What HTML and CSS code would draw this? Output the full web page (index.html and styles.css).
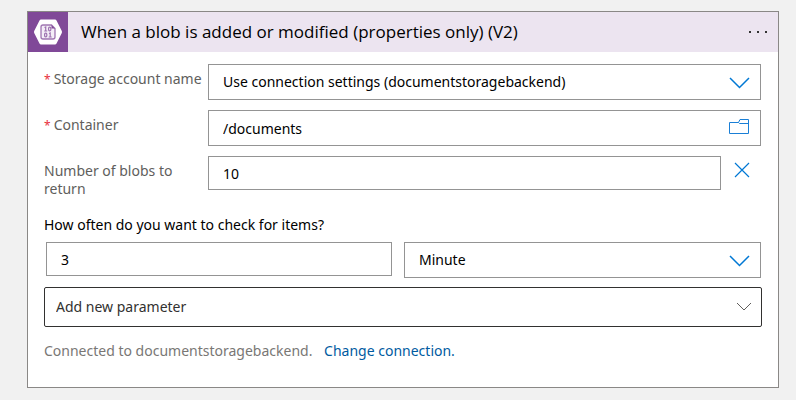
FILE: index.html
```html
<!DOCTYPE html>
<html lang="en">
<head>
<meta charset="utf-8">
<meta name="viewport" content="width=device-width, initial-scale=1">
<title>When a blob is added or modified</title>
<link rel="stylesheet" href="styles.css">
</head>
<body>
<main class="card">
  <header class="card-header">
    <span class="card-icon">
      <svg width="40" height="40" viewBox="0 0 40 40" aria-hidden="true">
        <path d="M13 7.500h14q1 0 1.500 .9l5.300 10.600q.4 1 0 2l-5.300 10.600q-.5 .9-1.500 .9H13q-1 0-1.500-.9L6.200 21q-.4-1 0-2l5.300-10.600q.5-.9 1.500-.9z" fill="#fff"/>
        <path d="M15 13h8.500l3.500 3.500V25q0 2-2 2H15q-2 0-2-2V15q0-2 2-2z" fill="#f4eef7" stroke="#804998" stroke-opacity=".75" stroke-width="1.300"/>
        <path d="M23.500 13v3.500H27z" fill="#804998"/>
        <g fill="none" stroke="#804998" stroke-opacity=".75" stroke-width="1.200">
          <path d="M16.500 15.500l1.200-.5v4M16.200 19h3"/>
          <rect x="20.600" y="15.200" width="2.200" height="3.600" rx="1"/>
          <rect x="16.600" y="21.200" width="2.200" height="3.600" rx="1"/>
          <path d="M21 21.500l1.200-.5v4M20.700 25h3"/>
        </g>
      </svg>
    </span>
    <h1 class="card-title">When a blob is added or modified (properties only) (V2)</h1>
    <button class="icon-button menu-button" type="button" aria-label="More commands">
      <svg width="20" height="4" viewBox="0 0 20 4" fill="#333" aria-hidden="true"><path d="M1 1h2v2H1zM9 1h2v2H9zM17 1h2v2h-2z"/></svg>
    </button>
  </header>
  <form class="card-body">
    <div class="row">
      <label class="label" for="account"><span class="required">*</span>Storage account name</label>
      <div class="field">
        <select class="control" id="account"><option>Use connection settings (documentstoragebackend)</option></select>
        <svg class="field-icon" width="22" height="12" viewBox="0 0 22 12" aria-hidden="true"><path d="M2 1l9.500 9.500L21 1" fill="none" stroke="#0078d4" stroke-width="1.500"/></svg>
      </div>
    </div>
    <div class="row">
      <label class="label" for="container"><span class="required">*</span>Container</label>
      <div class="field">
        <input class="control" id="container" type="text" value="/documents">
        <button class="icon-button field-icon folder" type="button" aria-label="Browse folders">
          <svg width="22" height="16" viewBox="0 0 22 16" fill="none" stroke="#1a7fd6" aria-hidden="true"><path d="M1.500 3.500h9l1.500-3h8.500v14h-19zM10.500 3.500l1 1h9"/></svg>
        </button>
      </div>
    </div>
    <div class="row">
      <label class="label" for="count">Number of blobs to return</label>
      <div class="field"><input class="control short" id="count" type="text" value="10"></div>
      <button class="icon-button remove" type="button" aria-label="Remove parameter">
        <svg width="16" height="16" viewBox="0 0 16 16" aria-hidden="true"><path d="M1 1l14 14M15 1L1 15" fill="none" stroke="#0078d4" stroke-width="1.200"/></svg>
      </button>
    </div>
    <fieldset class="schedule">
      <legend class="schedule-title">How often do you want to check for items?</legend>
      <div class="schedule-fields">
        <div class="field"><input class="control short" type="text" value="3" aria-label="Interval"></div>
        <div class="field">
          <select class="control" aria-label="Frequency"><option>Minute</option></select>
          <svg class="field-icon" width="22" height="12" viewBox="0 0 22 12" aria-hidden="true"><path d="M2 1l9.500 9.500L21 1" fill="none" stroke="#0078d4" stroke-width="1.500"/></svg>
        </div>
      </div>
    </fieldset>
    <div class="field">
      <select class="control parameter" aria-label="Add new parameter"><option>Add new parameter</option></select>
      <svg class="field-icon parameter-icon" width="16" height="10" viewBox="0 0 16 10" aria-hidden="true"><path d="M1 1l7 7 7-7" fill="none" stroke="#605e5c"/></svg>
    </div>
    <p class="connection">Connected to documentstoragebackend. <a class="link" href="#connection">Change connection.</a></p>
  </form>
</main>
</body>
</html>
```
FILE: styles.css
```css
* {
  box-sizing: border-box;
}

body {
  margin: 0;
  padding: 11px 17px 12px 27px;
  background: #f1f1f1;
  color: #000;
  font: 14px/18px "Segoe UI", "Noto Sans", sans-serif;
}

.card {
  border: 1px solid #8a8886;
  background: #fff;
}

.card-header {
  display: flex;
  align-items: center;
  height: 40px;
  background: #ece4f0;
}

.card-icon {
  width: 40px;
  height: 40px;
  background: #804998;
}

.card-title {
  flex: 1;
  margin: 0 0 0 13px;
  font-family: "Segoe UI", "Open Sans", sans-serif;
  font-size: 17px;
  font-weight: 400;
  line-height: 24px;
}

.icon-button {
  display: flex;
  padding: 0;
  border: 0;
  background: none;
  cursor: pointer;
}

.menu-button {
  margin-right: 10px;
}

.card-body {
  padding: 12px 16px 27px;
}

.row {
  display: flex;
  align-items: flex-start;
  margin: 0 1px 10px 0;
}

.label {
  flex: 0 0 164px;
  padding: 6px 6px 0 0;
  color: #605e5c;
}

.required {
  margin-right: 3px;
  color: #e8303c;
  font-size: 12px;
}

.field {
  position: relative;
  flex: 1;
  min-width: 0;
}

.control {
  display: block;
  width: 100%;
  height: 36px;
  margin: 0;
  padding: 0 14px;
  border: 1px solid #949494;
  border-radius: 0;
  appearance: none;
  background: #fff;
  color: #000;
  font: inherit;
}

.short {
  height: 34px;
}

.field-icon {
  position: absolute;
  top: 13px;
  right: 11px;
  pointer-events: none;
}

.folder {
  top: 9px;
  pointer-events: auto;
}

.remove {
  margin: 6px 11px 0 13px;
}

.schedule {
  min-width: 0;
  margin: 0 1px 9px 0;
  padding: 8px 0 0;
  border: 0;
}

.schedule-title {
  float: left;
  width: 100%;
  margin-bottom: 8px;
  padding: 0;
}

.schedule-fields {
  display: grid;
  clear: both;
  grid-template-columns: 346fr 357fr;
  gap: 12px;
  padding-left: 2px;
}

.parameter {
  height: 40px;
  padding: 0 11px;
  border-color: #323130;
  border-radius: 2px;
  color: #323130;
}

.parameter-icon {
  top: 15px;
  right: 10px;
}

.connection {
  margin: 15px 0 0;
  color: #797775;
}

.link {
  margin-left: 8px;
  color: #005ba1;
  text-decoration: none;
}
```
